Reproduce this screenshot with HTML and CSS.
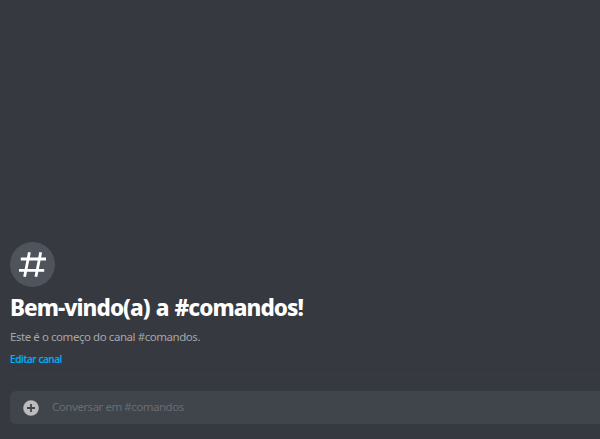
FILE: index.html
```html
<!DOCTYPE html>
<html lang="pt-BR">
<head>
<meta charset="utf-8">
<title>#comandos</title>
<link rel="stylesheet" href="styles.css">
</head>
<body>
<main class="chat">
  <section class="welcome">
    <div class="channel-icon">
      <svg width="45" height="45" viewBox="0 0 45 45" fill="none" stroke="#fff" stroke-width="2.8">
        <path d="M19.4 10.3 14.6 34.8M30.7 10.3 25.9 34.8M10.8 17H36M9 28.3H34.2"/>
      </svg>
    </div>
    <h1 class="title">Bem-vindo(a) a #comandos!</h1>
    <p class="description">Este é o começo do canal #comandos.</p>
    <a class="edit">Editar canal</a>
  </section>
  <div class="composer">
    <svg class="attach" width="16" height="16" viewBox="0 0 16 16">
      <circle cx="8" cy="8" r="7.8" fill="#b9bbbe"/>
      <path d="M8 4v8M4 8h8" stroke="#40444b" stroke-width="1.8"/>
    </svg>
    <span class="placeholder">Conversar em #comandos</span>
  </div>
</main>
</body>
</html>
```
FILE: styles.css
```css
* { box-sizing: border-box; }
body {
  margin: 0;
  background: #36393f;
  font-family: "Noto Sans", sans-serif;
  overflow: hidden;
}
.chat {
  height: 439px;
  display: flex;
  flex-direction: column;
  justify-content: flex-end;
  padding: 0 0 15px 10px;
}
.welcome {
  display: flex;
  flex-direction: column;
  align-items: flex-start;
  margin-bottom: 16px;
  padding-bottom: 6px;
  border-bottom: 1px solid #393c43;
  white-space: nowrap;
}
.channel-icon {
  width: 45px;
  height: 45px;
  border-radius: 50%;
  background: #4f545c;
}
.channel-icon svg { display: block; }
.title {
  margin: 6px 0 0;
  font: 800 22.5px/30px "Noto Sans", sans-serif;
  letter-spacing: -0.95px;
  word-spacing: 1.2px;
  color: #fff;
}
.description {
  margin: 5px 0 0;
  font-size: 11.5px;
  line-height: 18px;
  letter-spacing: -0.44px;
  color: #a5a7aa;
}
.edit {
  margin-top: 4px;
  font-size: 10px;
  font-weight: 500;
  line-height: 18px;
  letter-spacing: -0.35px;
  color: #00aff4;
  -webkit-text-stroke: 0.2px #00aff4;
}
.composer {
  display: flex;
  align-items: center;
  height: 33px;
  padding-left: 13px;
  border-radius: 6px 0 0 6px;
  background: #40444b;
}
.attach {
  flex: none;
  margin: 1px 13px 0 0;
}
.placeholder {
  margin-top: -1px;
  font-size: 11.5px;
  line-height: 18px;
  letter-spacing: -0.47px;
  color: #686c73;
}
```
